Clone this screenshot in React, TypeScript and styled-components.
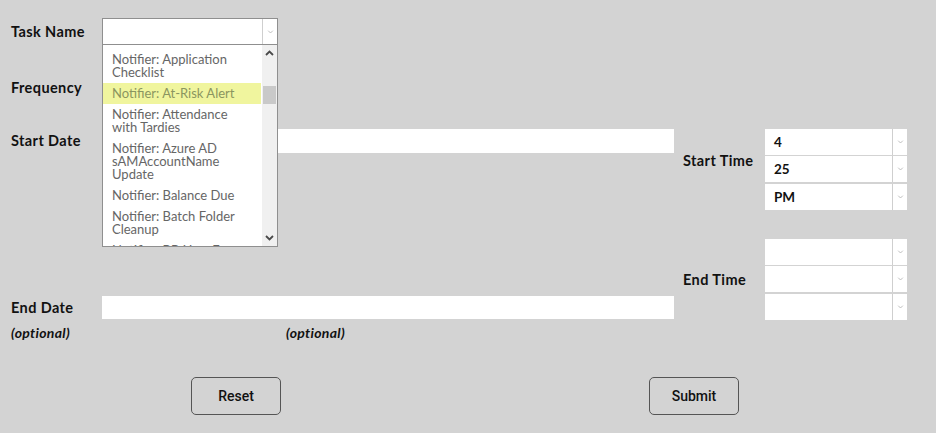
import styled, { createGlobalStyle } from 'styled-components';

const GlobalStyle = createGlobalStyle`
  html, body {
    margin: 0;
    padding: 0;
    background: #d3d3d3;
  }
  body {
    font-family: Lato, "Open Sans", sans-serif;
    color: #111;
  }
`;

const Page = styled.form`
  width: 936px;
  height: 433px;
  box-sizing: border-box;
  padding: 18px 0 0 11px;
  background: #d3d3d3;
  overflow: hidden;
`;

const Row = styled.div<{ $top?: number; $height?: number }>`
  display: flex;
  align-items: center;
  margin-top: ${(p) => p.$top ?? 0}px;
  height: ${(p) => (p.$height ? `${p.$height}px` : 'auto')};
`;

const Label = styled.label`
  width: 91px;
  flex-shrink: 0;
  font-size: 14.5px;
  font-weight: 700;
  letter-spacing: 0.4px;
  line-height: 16px;
`;

const SideLabel = styled(Label)<{ $offset?: number }>`
  width: 82px;
  align-self: flex-start;
  margin-top: ${(p) => p.$offset ?? 0}px;
`;

const Hint = styled.span<{ $indent?: number }>`
  font-size: 14px;
  font-weight: 700;
  font-style: italic;
  letter-spacing: 0.3px;
  line-height: 16px;
  margin-left: ${(p) => p.$indent ?? 0}px;
`;

const HintLabel = styled(Hint)`
  width: 91px;
  flex-shrink: 0;
`;

const SelectWrap = styled.div`
  position: relative;
  width: 176px;
  height: 27px;
`;

const SelectBox = styled.div<{ $bordered?: boolean; $w?: number; $h?: number }>`
  display: flex;
  width: ${(p) => p.$w ?? 176}px;
  height: ${(p) => p.$h ?? 27}px;
  box-sizing: border-box;
  background: #fff;
  border: ${(p) => (p.$bordered ? '1px solid #8f8f8f' : 'none')};
`;

const SelectValue = styled.div`
  flex: 1;
  display: flex;
  align-items: center;
  padding-left: 9px;
  font-size: 13.5px;
  font-weight: 700;
  color: #111;
`;

const ArrowCell = styled.div`
  width: 14px;
  display: flex;
  align-items: center;
  justify-content: center;
  border-left: 1px solid #cfcfcf;
`;

const DropList = styled.div`
  position: absolute;
  top: 100%;
  left: 0;
  width: 176px;
  height: 202px;
  box-sizing: border-box;
  border: 1px solid #8f8f8f;
  border-top: none;
  background: #fff;
  display: flex;
  z-index: 5;
`;

const Options = styled.div`
  flex: 1;
  overflow: hidden;
  padding-top: 4px;
`;

const Option = styled.div<{ $active?: boolean }>`
  padding: 4px 4px 4px 9px;
  margin-right: 1px;
  font-size: 13px;
  line-height: 13px;
  white-space: nowrap;
  color: ${(p) => (p.$active ? '#8b9560' : '#666')};
  background: ${(p) => (p.$active ? '#f0f59e' : 'transparent')};
`;

const ScrollBar = styled.div`
  width: 15px;
  background: #f0f0f0;
  display: flex;
  flex-direction: column;
  align-items: center;
`;

const ScrollBtn = styled.div`
  height: 16px;
  width: 100%;
  display: flex;
  align-items: center;
  justify-content: center;
`;

const Track = styled.div`
  flex: 1;
  width: 100%;
`;

const Thumb = styled.div`
  margin: 25px 1px 0;
  height: 18px;
  background: #c9c9c9;
`;

const Section = styled.div<{ $top: number; $height: number }>`
  display: flex;
  align-items: flex-start;
  margin-top: ${(p) => p.$top}px;
  height: ${(p) => p.$height}px;
`;

const LeftCol = styled.div<{ $pad?: number }>`
  width: 672px;
  padding-top: ${(p) => p.$pad ?? 0}px;
`;

const TextInput = styled.div<{ $h: number }>`
  width: 572px;
  height: ${(p) => p.$h}px;
  background: #fff;
`;

const TimeStack = styled.div`
  display: flex;
  flex-direction: column;
  gap: 1.4px;
`;

const ButtonRow = styled.div`
  display: flex;
  gap: 368px;
  margin: 29px 0 0 180px;
`;

const Button = styled.button`
  width: 90px;
  height: 38px;
  box-sizing: border-box;
  border: 1px solid #555;
  border-radius: 5px;
  background: #d3d3d3;
  font-family: Roboto, "Liberation Sans", sans-serif;
  font-size: 14px;
  font-weight: 500;
  color: #111;
  padding: 0;
`;

function Chevron({ up, dark }: { up?: boolean; dark?: boolean }) {
  return (
    <svg width={dark ? 9 : 7} height={dark ? 6 : 4} viewBox="0 0 9 6">
      <polyline
        points={up ? '1,5 4.5,1.5 8,5' : '1,1 4.5,4.5 8,1'}
        fill="none"
        stroke={dark ? '#4a4a4a' : '#b0b0b0'}
        strokeWidth={dark ? 1.8 : 1.2}
      />
    </svg>
  );
}

function Select({ value, w, h, bordered }: { value?: string; w?: number; h?: number; bordered?: boolean }) {
  return (
    <SelectBox $w={w} $h={h} $bordered={bordered}>
      <SelectValue>{value}</SelectValue>
      <ArrowCell>
        <Chevron />
      </ArrowCell>
    </SelectBox>
  );
}

const tasks: { lines: string[]; active?: boolean }[] = [
  { lines: ['Notifier: Application', 'Checklist'] },
  { lines: ['Notifier: At-Risk Alert'], active: true },
  { lines: ['Notifier: Attendance', 'with Tardies'] },
  { lines: ['Notifier: Azure AD', 'sAMAccountName', 'Update'] },
  { lines: ['Notifier: Balance Due'] },
  { lines: ['Notifier: Batch Folder', 'Cleanup'] },
  { lines: ['Notifier: BB User Extract'] },
];

export default function App() {
  return (
    <>
      <GlobalStyle />
      <Page>
        <Row $height={27}>
          <Label>Task Name</Label>
          <SelectWrap>
            <Select bordered />
            <DropList>
              <Options>
                {tasks.map((t) => (
                  <Option key={t.lines.join(' ')} $active={t.active}>
                    {t.lines.map((l) => (
                      <div key={l}>{l}</div>
                    ))}
                  </Option>
                ))}
              </Options>
              <ScrollBar>
                <ScrollBtn>
                  <Chevron up dark />
                </ScrollBtn>
                <Track>
                  <Thumb />
                </Track>
                <ScrollBtn>
                  <Chevron dark />
                </ScrollBtn>
              </ScrollBar>
            </DropList>
          </SelectWrap>
        </Row>

        <Row $top={30} $height={26}>
          <Label>Frequency</Label>
          <Select bordered />
        </Row>

        <Section $top={28} $height={81}>
          <LeftCol>
            <Row $height={24}>
              <Label>Start Date</Label>
              <TextInput $h={24} />
            </Row>
          </LeftCol>
          <SideLabel $offset={24}>Start Time</SideLabel>
          <TimeStack>
            <Select value="4" w={142} h={26} />
            <Select value="25" w={142} h={26} />
            <Select value="PM" w={142} h={26} />
          </TimeStack>
        </Section>

        <Section $top={29} $height={109}>
          <LeftCol $pad={57}>
            <Row $height={23}>
              <Label>End Date</Label>
              <TextInput $h={23} />
            </Row>
            <Row $top={6}>
              <HintLabel>(optional)</HintLabel>
              <Hint $indent={184}>(optional)</Hint>
            </Row>
          </LeftCol>
          <SideLabel $offset={33}>End Time</SideLabel>
          <TimeStack>
            <Select w={142} h={26} />
            <Select w={142} h={26} />
            <Select w={142} h={26} />
          </TimeStack>
        </Section>

        <ButtonRow>
          <Button type="button">Reset</Button>
          <Button type="button">Submit</Button>
        </ButtonRow>
      </Page>
    </>
  );
}
